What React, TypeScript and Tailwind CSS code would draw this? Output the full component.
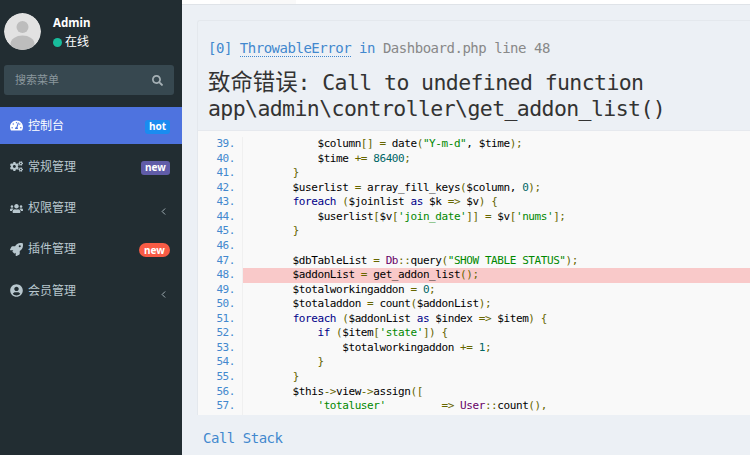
import { FaTachometerAlt, FaCogs, FaUsers, FaRocket, FaUserCircle, FaSearch } from 'react-icons/fa';
import { ChevronLeft } from 'lucide-react';
import type { ReactNode } from 'react';

const MONO = "font-['DejaVu_Sans_Mono','Noto_Sans_CJK_SC',monospace]";

// k keyword, s string, p punctuation, n number, t type, default plain
const t = {
  k: 'text-[#000088]',
  s: 'text-[#008800]',
  p: 'text-[#666600]',
  n: 'text-[#006666]',
  t: 'text-[#660066]',
};

type Tok = [string, string?];

const lines: { no: number; toks: Tok[]; bad?: boolean }[] = [
  { no: 39, toks: [['            $column'], ['[]', t.p], [' '], ['=', t.p], [' date'], ['(', t.p], ['"Y-m-d"', t.s], [','], [' $time'], [');', t.p]] },
  { no: 40, toks: [['            $time '], ['+=', t.p], [' '], ['86400', t.n], [';', t.p]] },
  { no: 41, toks: [['        '], ['}', t.p]] },
  { no: 42, toks: [['        $userlist '], ['=', t.p], [' array_fill_keys'], ['(', t.p], ['$column, '], ['0', t.n], [');', t.p]] },
  { no: 43, toks: [['        '], ['foreach', t.k], [' '], ['(', t.p], ['$joinlist '], ['as', t.k], [' $k '], ['=>', t.p], [' $v'], [')', t.p], [' '], ['{', t.p]] },
  { no: 44, toks: [['            $userlist'], ['[', t.p], ['$v'], ['[', t.p], ["'join_date'", t.s], [']]', t.p], [' '], ['=', t.p], [' $v'], ['[', t.p], ["'nums'", t.s], ['];', t.p]] },
  { no: 45, toks: [['        '], ['}', t.p]] },
  { no: 46, toks: [[' ']] },
  { no: 47, toks: [['        $dbTableList '], ['=', t.p], [' '], ['Db', t.t], ['::', t.p], ['query'], ['(', t.p], ['"SHOW TABLE STATUS"', t.s], [');', t.p]] },
  { no: 48, bad: true, toks: [['        $addonList '], ['=', t.p], [' get_addon_list'], ['();', t.p]] },
  { no: 49, toks: [['        $totalworkingaddon '], ['=', t.p], [' '], ['0', t.n], [';', t.p]] },
  { no: 50, toks: [['        $totaladdon '], ['=', t.p], [' count'], ['(', t.p], ['$addonList'], [');', t.p]] },
  { no: 51, toks: [['        '], ['foreach', t.k], [' '], ['(', t.p], ['$addonList '], ['as', t.k], [' $index '], ['=>', t.p], [' $item'], [')', t.p], [' '], ['{', t.p]] },
  { no: 52, toks: [['            '], ['if', t.k], [' '], ['(', t.p], ['$item'], ['[', t.p], ["'state'", t.s], ['])', t.p], [' '], ['{', t.p]] },
  { no: 53, toks: [['                $totalworkingaddon '], ['+=', t.p], [' '], ['1', t.n], [';', t.p]] },
  { no: 54, toks: [['            '], ['}', t.p]] },
  { no: 55, toks: [['        '], ['}', t.p]] },
  { no: 56, toks: [['        $this'], ['->', t.p], ['view'], ['->', t.p], ['assign'], ['([', t.p]] },
  { no: 57, toks: [['            '], ["'totaluser'", t.s], ['         '], ['=>', t.p], [' '], ['User', t.t], ['::', t.p], ['count'], ['(),', t.p]] },
];

function Avatar() {
  return (
    <svg viewBox="0 0 37 37" className="w-[37px] h-[37px] shrink-0 rounded-full">
      <circle cx="18.5" cy="18.5" r="18.5" fill="#e2e2e2" />
      <circle cx="18.5" cy="14" r="6" fill="#bdbdbd" />
      <ellipse cx="18.5" cy="31" rx="12" ry="8.5" fill="#bdbdbd" />
    </svg>
  );
}

function MenuItem({ icon, label, active, right }: { icon: ReactNode; label: string; active?: boolean; right?: ReactNode }) {
  return (
    <div
      className={`h-[37px] mb-[4.25px] pl-[10px] pr-[12px] flex items-center text-[12px] ${
        active ? 'bg-[#4e73df] text-white' : 'text-[#b8c7ce]'
      }`}
    >
      <span className="w-[18px] flex items-center text-[13px]">{icon}</span>
      <span className="flex-1">{label}</span>
      {right}
    </div>
  );
}

function Badge({ cls, text }: { cls: string; text: string }) {
  return <span className={`h-[14px] mt-[2px] flex items-center justify-center text-white text-[10px] font-bold ${cls}`}>{text}</span>;
}

function Angle() {
  return <ChevronLeft size={11} strokeWidth={2} className="text-[#aab7bd] mr-[1px] mt-[7px]" />;
}

export default function App() {
  return (
    <div className="w-[750px] h-[455px] overflow-hidden flex bg-[#ecf0f5]">
      {/* Sidebar */}
      <aside className="w-[182px] shrink-0 bg-[#222d32] font-['Noto_Sans','Noto_Sans_CJK_SC',sans-serif]">
        <div className="pt-[13px] pl-[4px] flex gap-[12px]">
          <Avatar />
          <div>
            <div className="text-white text-[11.5px] font-bold leading-[16px] mt-[2px]">Admin</div>
            <div className="flex items-center gap-[3px] text-white text-[12px] leading-[16px] mt-[3px]">
              <span className="w-[9px] h-[9px] shrink-0 rounded-full bg-[#18bc9c]" />
              在线
            </div>
          </div>
        </div>
        <div className="mt-[15px] mx-[4px] w-[170px] h-[30px] bg-[#374850] rounded-[3px] flex items-center justify-between pl-[11px] pr-[11px] text-[11px] text-[#8a979d]">
          <span>搜索菜单</span>
          <FaSearch className="text-[11px] text-[#a5b0b5]" />
        </div>
        <nav className="mt-[12px]">
          <MenuItem
            active
            icon={<FaTachometerAlt />}
            label="控制台"
            right={<Badge cls="w-[25px] rounded-[3px] bg-[#1a8cf0]" text="hot" />}
          />
          <MenuItem icon={<FaCogs />} label="常规管理" right={<Badge cls="w-[29px] rounded-[3px] bg-[#605ca8]" text="new" />} />
          <MenuItem icon={<FaUsers />} label="权限管理" right={<Angle />} />
          <MenuItem icon={<FaRocket />} label="插件管理" right={<Badge cls="w-[31px] rounded-full bg-[#f75b45]" text="new" />} />
          <MenuItem icon={<FaUserCircle />} label="会员管理" right={<Angle />} />
        </nav>
      </aside>

      {/* Main */}
      <main className={`flex-1 min-w-0 ${MONO}`}>
        <div className="h-[5px] bg-white border-b border-[#dfe3e8] flex">
          <div className="ml-[38px] w-[76px] bg-[#f9f9f9]" />
        </div>
        <div className="ml-[15px] mt-[15px] border-l border-t border-[#e4e8ed] rounded-tl-[3px]">
          <div className="pl-[10px] pt-[18px] h-[109px]">
            <div className="text-[14px] tracking-[-0.48px] leading-[18px] whitespace-nowrap">
              <span className="text-[#4288ce]">[0]</span>{' '}
              <span className="text-[#4288ce] border-b border-dotted border-[#4288ce]">ThrowableError</span>{' '}
              <span className="text-[#4288ce]">in</span>{' '}
              <span className="text-[#888888]">Dashboard.php line 48</span>
            </div>
            <h1 className="mt-[12px] text-[21.5px] tracking-[-0.59px] leading-[26px] text-[#333333] whitespace-nowrap font-normal">
              <div>
                <span className="text-[22.4px] tracking-normal">致命错误</span>: Call to undefined function
              </div>
              <div>app\admin\controller\get_addon_list()</div>
            </h1>
          </div>
          <div className="bg-[#f9f9f9] border-t border-[#e6e9ee] h-[285px] pt-[6px] text-[11px] tracking-[-0.42px] leading-[14.56px] flex overflow-hidden">
            <div className="w-[44px] shrink-0 text-right text-[#4288ce] pr-[7px]">
              {lines.map((l) => (
                <div key={l.no}>{l.no}.</div>
              ))}
            </div>
            <div className="flex-1 min-w-0 border-l border-[#f0f0f0] text-[#000000]">
              {lines.map((l) => (
                <div key={l.no} className={`whitespace-pre ${l.bad ? 'bg-[#f9c9c9]' : ''}`}>
                  {l.toks.map(([s, c], i) => (
                    <span key={i} className={c}>
                      {s}
                    </span>
                  ))}
                </div>
              ))}
            </div>
          </div>
        </div>
        <div className="ml-[21px] mt-[14px] text-[14px] tracking-[-0.48px] leading-[18px] text-[#4288ce]">Call Stack</div>
      </main>
    </div>
  );
}
